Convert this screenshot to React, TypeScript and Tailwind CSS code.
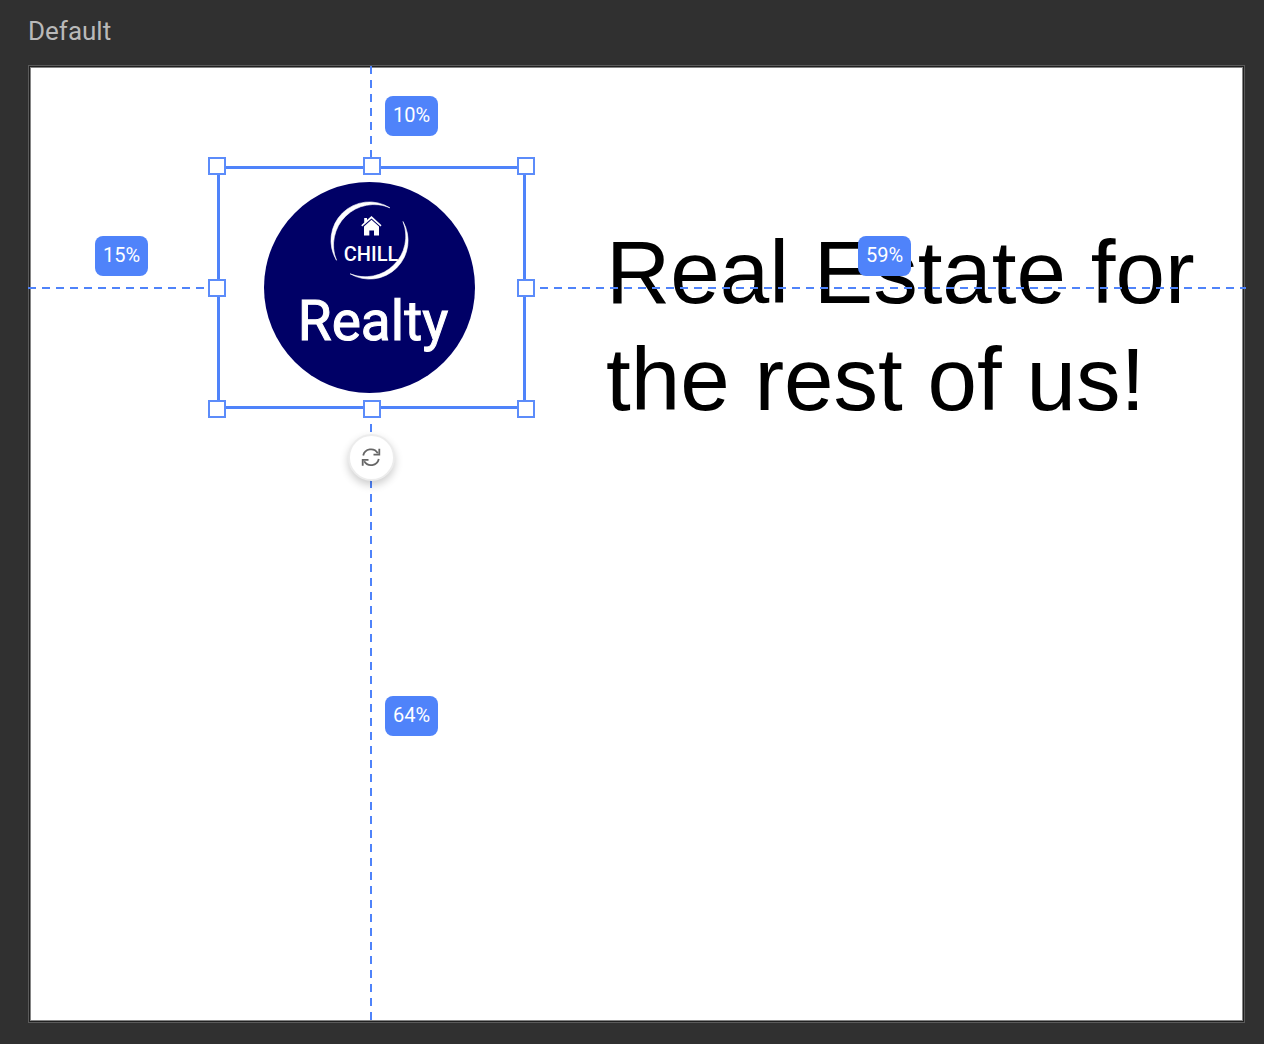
import React from "react";

const HANDLES = [
  "top left",
  "top",
  "top right",
  "left",
  null,
  "right",
  "bottom left",
  "bottom",
  "bottom right",
];

const DISTANCES = [
  { label: "10%", place: "left-[356px] top-[30px]" },
  { label: "15%", place: "left-[66px] top-[170px]" },
  { label: "59%", place: "left-[829px] top-[170px]" },
  { label: "64%", place: "left-[356px] top-[630px]" },
];

const H_DASH =
  "absolute h-0.5 bg-[repeating-linear-gradient(to_right,#4f83fa_0px,#4f83fa_8px,transparent_8px,transparent_14px)]";
const V_DASH =
  "absolute w-0.5 bg-[repeating-linear-gradient(to_bottom,#4f83fa_0px,#4f83fa_8px,transparent_8px,transparent_14px)]";

function Logo() {
  return (
    <svg viewBox="264 182 211 211" className="h-[211px] w-[211px]" role="img" aria-label="Chill Realty">
      <circle cx="369.5" cy="287.5" r="105.5" fill="#000066" />
      <g fill="#fff">
        <path d="M336.500 260.300 A38.500 38.500 0 0 1 389.900 207.800 A40.500 40.500 0 0 0 336.500 260.300Z" stroke="#fff" strokeWidth="0.6" />
        <path d="M403 221.500 A38.500 38.500 0 0 1 350.100 273.800 A40.500 40.500 0 0 0 403 221.500Z" stroke="#fff" strokeWidth="0.6" />
        <path d="M371.500 216 L381.500 225.200 L380.500 226.500 L371.500 218.400 L362.200 226.500 L361.300 225.200 L364.200 222.500 V218 H367 V220Z" />
        <path d="M371.500 219.800 L379 226.500 V235.500 H374 V230.500 H369.300 V235.500 H364 V226.500Z" />
      </g>
      <text x="371" y="261" textAnchor="middle" fill="#fff" className="font-['Roboto',sans-serif] text-[20px] font-medium">
        CHILL
      </text>
      <text
        x="373"
        y="340"
        textAnchor="middle"
        fill="#fff"
        stroke="#fff"
        strokeWidth="1"
        className="font-['Roboto',sans-serif] text-[55px]"
      >
        Realty
      </text>
    </svg>
  );
}

function RotateIcon() {
  return (
    <svg viewBox="0 0 21 21" className="size-[21px]" fill="none" stroke="#666" strokeWidth="1.8" aria-hidden="true">
      <path d="M2.200 8.500 A8 8 0 0 1 16.800 6.200" />
      <path d="M18.300 1.800 V7.600 H12.500" />
      <path d="M17.800 12 A8 8 0 0 1 3.200 14.300" />
      <path d="M1.700 18.700 V12.900 H7.500" />
    </svg>
  );
}

export default function App() {
  return (
    <main className="flex min-h-screen flex-col bg-[#303030] pt-4 pr-[19px] pb-[21px] pl-7 font-['Roboto',sans-serif]">
      <h1 className="mb-[19px] text-[26px] leading-[30px] font-normal text-[#b9b9b9]">Default</h1>
      <section
        aria-label="Default artboard"
        className="relative flex flex-1 flex-col border border-[#5a5a5a] bg-[#202020] p-px"
      >
        <div className="flex-1 border border-[#858585] bg-white pt-[151px] pl-[575px]">
          <p className="font-['Liberation_Sans',sans-serif] text-[89px] leading-[107px] text-black">
            Real Estate for
            <br />
            the rest of us!
          </p>
        </div>

        <div className={`${H_DASH} top-[221px] -left-px w-[180px]`} />
        <div className={`${H_DASH} top-[221px] -right-0.5 left-[497px]`} />
        <div className={`${V_DASH} top-0 left-[341px] h-[92px]`} />
        <div className={`${V_DASH} top-[344px] bottom-px left-[341px]`} />

        <div className="absolute top-[91px] left-[179px] h-[261px] w-[327px]">
          <div className="flex size-full pt-[25px] pl-14">
            <Logo />
          </div>
          <div className="absolute inset-[9px] border-[3px] border-[#4f83fa]" />
          <div className="absolute inset-0 grid grid-cols-[18px_18px_18px] content-between justify-between">
            {HANDLES.map((side) =>
              side ? (
                <button
                  key={side}
                  type="button"
                  aria-label={`Resize ${side}`}
                  className="size-[18px] border-2 border-[#5c8cfa] bg-white"
                />
              ) : (
                <span key="center" />
              ),
            )}
          </div>
        </div>

        {DISTANCES.map(({ label, place }) => (
          <span
            key={label}
            className={`absolute flex h-10 w-[53px] justify-center rounded-lg bg-[#4f83fa] text-xl leading-[38px] text-white ${place}`}
          >
            {label}
          </span>
        ))}

        <button
          type="button"
          aria-label="Rotate"
          className="absolute top-[368px] left-[319px] flex size-[47px] items-center justify-center rounded-full border-2 border-[#ececec] bg-white shadow-[0_4px_8px_rgba(0,0,0,0.2)]"
        >
          <RotateIcon />
        </button>
      </section>
    </main>
  );
}
